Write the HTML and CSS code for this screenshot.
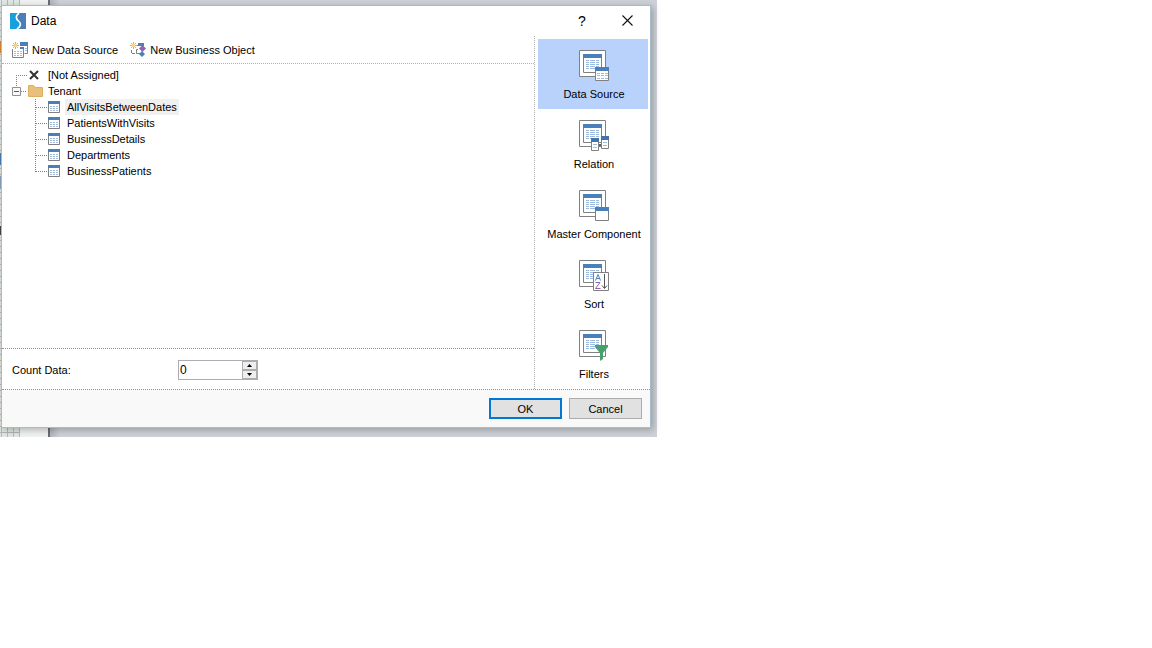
FILE: index.html
```html
<!DOCTYPE html>
<html lang="en">
<head>
<meta charset="utf-8">
<title>Data</title>
<link rel="stylesheet" href="styles.css">
</head>
<body>
<svg class="defs" aria-hidden="true">
  <symbol id="table" viewBox="0 0 12 12">
    <path fill="#fff" stroke="#808080" d="M.5.5h11v11H.5z"/><path fill="#4a80ba" d="M0 0h12v3H0z"/>
    <path stroke="#9dbbe0" stroke-dasharray="2 1" d="M2 5.5h8M2 7.5h8M2 9.5h8"/>
  </symbol>
  <symbol id="page" viewBox="0 0 30 31">
    <path fill="#fff" stroke="#808080" d="M.5.5h26v26H.5z"/>
    <path fill="#fff" stroke="#808080" d="M4.5 4.500h18v18h-18z"/><path fill="#4a80ba" d="M4 4h19v4H4z"/>
    <path stroke="#9dbbe0" d="M7 10.5h3m1 0h5m1 0h3M7 12.5h3m1 0h5m1 0h3M7 14.5h3m1 0h5m1 0h3M7 16.5h3m1 0h5m1 0h3M7 18.5h3m1 0h5m1 0h3"/>
  </symbol>
</svg>
<main class="stage">
  <section class="dialog" role="dialog" aria-labelledby="dialog-title">
    <header class="titlebar">
      <svg class="logo" viewBox="0 0 16 16" aria-hidden="true"><path fill="#199fdc" d="M0 0h8v16H0z"/><path fill="#4b7eb9" d="M8 0h8v16H8z"/><path fill="#199fdc" d="M5 0h3v8l3 3-2 5H5z"/><path fill="none" stroke="#fff" stroke-width="1.600" d="M9 0C5 3 6 6 8.500 8s3 5-1.500 8"/></svg>
      <h1 class="title" id="dialog-title">Data</h1>
      <button class="caption-button help" aria-label="Help">?</button>
      <button class="caption-button" aria-label="Close"><svg class="close" viewBox="0 0 11 11"><path stroke="#111" stroke-width="1.1" d="M.5.5l10 10M10.5.5l-10 10"/></svg></button>
    </header>
    <div class="body">
      <div class="content">
        <div class="toolbar">
          <button class="tool">
            <svg class="tool-icon" viewBox="0 0 16 16"><path fill="#fff" stroke="#808080" d="M8.5 1.5h7v10h-3"/><path fill="#4a80ba" d="M8 0h8v4H8z"/><path fill="#fff" stroke="#808080" d="M.5 7v8.500h11V5.500H8"/><path fill="#4a80ba" d="M8 5h4v2H8z"/><path stroke="#9dbbe0" stroke-dasharray="2 1" d="M2 9.500h9M2 11.500h9M2 13.500h9M13 6.500h2M13 8.500h2"/><path stroke="#e9ae59" d="M3.500 0v7M0 3.500h7M1 1l5 5M6 1L1 6"/><path fill="#f8d28b" d="M2 2h3v3H2z"/></svg>
            New Data Source</button>
          <button class="tool">
            <svg class="tool-icon" viewBox="0 0 16 16"><path fill="none" stroke="#808080" d="M7 3.500h5M12.500 3v3M1.500 8v3M2 11.500h3M8 7.500H6.500v4H10"/><path fill="#4a80ba" d="M8 1h6v3H8zM12 9l3 3-3 3-3-3z"/><path fill="#9362b3" d="M12.500 3L16 6.500 12.500 10 9 6.500z"/><path stroke="#e9ae59" d="M3.500 0v7M0 3.500h7M1 1l5 5M6 1L1 6"/><path fill="#f8d28b" d="M2 2h3v3H2z"/></svg>
            New Business Object</button>
        </div>
        <ul class="tree">
          <li class="node"><svg class="guide" viewBox="0 0 16 16"><path class="dots" d="M4.500 8v8M4 8.500h12"/></svg><svg class="node-icon cross" viewBox="0 0 12 12"><path stroke="#333" stroke-width="2" d="M2 2l8 8M10 2l-8 8"/></svg><span class="root-label">[Not Assigned]</span></li>
          <li class="node"><button class="expander" aria-label="Collapse Tenant"><svg class="guide" viewBox="0 0 16 16"><path class="dots" d="M4.500 0v4M9 8.500h6"/><path fill="#fafafa" stroke="#919191" d="M.5 4.500h8v8h-8z"/><path stroke="#395b9a" d="M2 8.500h5"/></svg></button><svg class="folder" viewBox="0 0 16 14"><path fill="#e9c07b" stroke="#dfae5e" d="M.5 1.500h5l2 2h7v9H.5z"/></svg><span class="root-label">Tenant</span></li>
          <li class="node child"><svg class="guide" viewBox="0 0 16 16"><path class="dots" d="M3.500 0v16M4 8.500h11"/></svg><svg class="node-icon"><use href="#table"/></svg><span class="label selected">AllVisitsBetweenDates</span></li>
          <li class="node child"><svg class="guide" viewBox="0 0 16 16"><path class="dots" d="M3.500 0v16M4 8.500h11"/></svg><svg class="node-icon"><use href="#table"/></svg><span class="label">PatientsWithVisits</span></li>
          <li class="node child"><svg class="guide" viewBox="0 0 16 16"><path class="dots" d="M3.500 0v16M4 8.500h11"/></svg><svg class="node-icon"><use href="#table"/></svg><span class="label">BusinessDetails</span></li>
          <li class="node child"><svg class="guide" viewBox="0 0 16 16"><path class="dots" d="M3.500 0v16M4 8.500h11"/></svg><svg class="node-icon"><use href="#table"/></svg><span class="label">Departments</span></li>
          <li class="node child"><svg class="guide" viewBox="0 0 16 16"><path class="dots" d="M3.500 0v9M4 8.500h11"/></svg><svg class="node-icon"><use href="#table"/></svg><span class="label">BusinessPatients</span></li>
        </ul>
        <div class="count">
          <label class="count-label" for="count">Count Data:</label>
          <div class="spinner">
            <input class="count-input" id="count" type="text" inputmode="numeric" value="0">
            <div class="steps">
              <button class="step" aria-label="Increase"><svg class="arrow" viewBox="0 0 5 3"><path d="M0 3h5L2.500 0z"/></svg></button>
              <button class="step" aria-label="Decrease"><svg class="arrow" viewBox="0 0 5 3"><path d="M0 0h5L2.500 3z"/></svg></button>
            </div>
          </div>
        </div>
      </div>
      <nav class="sidebar">
        <button class="tab active"><svg class="tab-icon" viewBox="0 0 30 31"><use href="#page" width="30" height="31"/><path fill="#fff" stroke="#808080" d="M16.500 17.500h13v13h-13z"/><path fill="#4a80ba" d="M16 17h14v4H16z"/><path stroke="#9dbbe0" stroke-dasharray="3 1" d="M18 23.500h11M18 25.500h11M18 28.500h11"/></svg>Data Source</button>
        <button class="tab"><svg class="tab-icon" viewBox="0 0 30 31"><use href="#page" width="30" height="31"/><path stroke="#606060" stroke-width="2" d="M19 25h4"/><path fill="#fff" stroke="#808080" d="M12.500 18.500h7v12h-7zM22.500 16.500h7v12h-7z"/><path fill="#4373aa" d="M12 18h8v4h-8zM22 16h8v4h-8z"/><path stroke="#9dbbe0" d="M14 24.500h4M14 27.500h4M24 22.500h4M24 25.500h4"/></svg>Relation</button>
        <button class="tab"><svg class="tab-icon" viewBox="0 0 30 31"><use href="#page" width="30" height="31"/><path fill="#fff" stroke="#808080" d="M16.500 17.500h13v13h-13z"/><path fill="#4a80ba" d="M16 17h14v4H16z"/></svg>Master Component</button>
        <button class="tab"><svg class="tab-icon" viewBox="0 0 30 31"><use href="#page" width="30" height="31"/><path fill="#fff" stroke="#808080" d="M14.500 12.500h15v18h-15z"/><path fill="none" stroke="#4a80ba" d="M16.500 20.500l2.500-6 2.500 6M17.500 18.500h3"/><path fill="none" stroke="#9361b3" d="M16.500 22.500h4.500l-4.500 6h5"/><path fill="none" stroke="#555" d="M25.500 14v14M23 25.500l2.500 3 2.500-3"/></svg>Sort</button>
        <button class="tab"><svg class="tab-icon" viewBox="0 0 30 31"><use href="#page" width="30" height="31"/><path fill="#48a070" d="M16 15h13v2l-5 6v6l-3 2v-8l-5-6z"/></svg>Filters</button>
      </nav>
    </div>
    <footer class="footer">
      <button class="action primary">OK</button>
      <button class="action">Cancel</button>
    </footer>
  </section>
</main>
</body>
</html>
```
FILE: styles.css
```css
* { box-sizing: border-box; }
body { margin: 0; background: #fff; color: #000; font: 11px/16px "Liberation Sans", Arial, sans-serif; }
button { margin: 0; padding: 0; border: 0; background: none; color: inherit; font: inherit; }
svg { display: block; flex: none; }
.defs { position: absolute; width: 0; height: 0; }
.stage {
  max-width: 657px;
  padding: 5px 6px 9px 1px;
  background:
    linear-gradient(#d98b35, #d98b35) 0 41px / 1px 12px no-repeat,
    linear-gradient(#4a80ba, #4a80ba) 0 153px / 1px 12px no-repeat,
    linear-gradient(#8fa3c6, #8fa3c6) 0 176px / 1px 13px no-repeat,
    linear-gradient(#444, #444) 0 226px / 1px 9px no-repeat,
    repeating-linear-gradient(90deg, #b5bbb7 0 1px, transparent 1px 6px) 1px 0 / 19px 100% no-repeat,
    repeating-linear-gradient(#b5b5b5 0 1px, transparent 1px 6px) 0 6px / 20px 100% no-repeat,
    linear-gradient(90deg, #dfe8e2 0 20px, #f1f2f2 20px 48px, #6a6e72 48px 50px, #b0b5bb 50px, #ced2d8 60px);
}
.dialog { border: 1px solid #a5bccb; background: #fff; box-shadow: 2px 2px 7px #0004; }
.titlebar { display: flex; align-items: center; height: 30px; padding: 0 15px 1px 8px; }
.logo { width: 16px; height: 16px; }
.title { flex: 1; margin: 0 0 0 5px; font-size: 12px; font-weight: 400; }
.caption-button { display: grid; place-items: center; width: 16px; height: 24px; margin-left: 29px; }
.help { font-size: 14px; }
.close { width: 11px; height: 11px; }
.body { display: flex; }
.content { display: flex; flex: 1; flex-direction: column; min-width: 0; }
.toolbar { display: flex; gap: 12px; height: 28px; padding: 0 10px; border-bottom: 1px dotted #b0b0b0; }
.tool { display: flex; align-items: center; gap: 4px; }
.tool-icon { width: 16px; height: 16px; }
.tree { flex: 1; margin: 0; padding: 3px 10px; list-style: none; }
.node { display: flex; align-items: center; height: 16px; }
.child { padding-left: 20px; }
.guide { width: 16px; height: 16px; }
.dots { stroke: #808080; stroke-dasharray: 1 1; }
.node-icon { width: 12px; height: 12px; }
.cross { margin-right: 4px; }
.folder { width: 16px; height: 14px; }
.root-label { padding-left: 4px; }
.label { margin-left: 5px; padding: 0 2px; }
.selected { background: #f0f0f0; }
.count { display: flex; align-items: center; height: 41px; padding: 2px 10px 0; border-top: 1px dotted #909090; }
.count-label { width: 166px; }
.spinner { display: flex; width: 80px; height: 20px; border: 1px solid #abadb3; }
.count-input { flex: 1; min-width: 0; padding: 0 1px; border: 0; background: #fff; font: inherit; font-size: 12px; }
.steps { display: flex; flex-direction: column; width: 15px; }
.step { display: grid; flex: 1; place-items: center; border: 1px solid #adadad; background: #eee; }
.arrow { width: 5px; height: 3px; }
.sidebar { width: 116px; padding: 3px 2px 0 3px; border-left: 1px dotted #b0b0b0; }
.tab { display: flex; flex-direction: column; align-items: center; gap: 5px; width: 100%; height: 70px; padding: 11px 0 0 2px; }
.active { background: #b8d2fc; }
.tab-icon { width: 30px; height: 31px; }
.footer { display: flex; justify-content: flex-end; gap: 7px; padding: 8px; border-top: 1px dotted #909090; background: #f9f9f9; }
.action { width: 73px; height: 21px; border: 1px solid #adadad; background: #e1e1e1; }
.primary { border: 2px solid #0078d7; }
```
